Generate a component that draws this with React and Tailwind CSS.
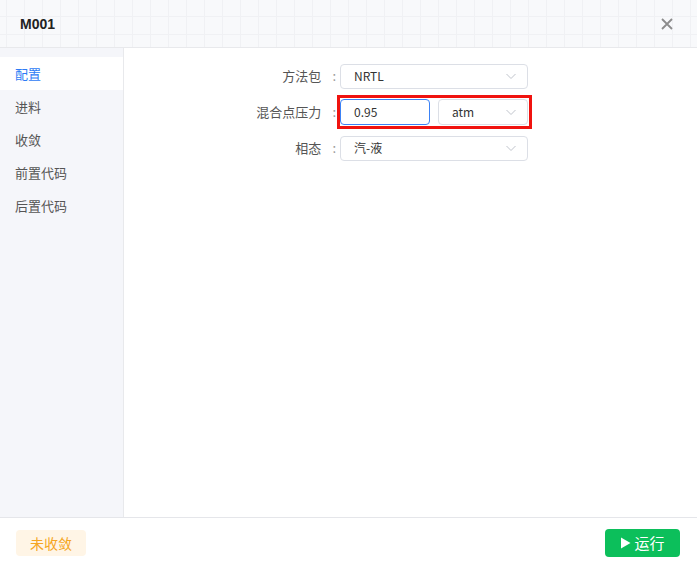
import { useState } from 'react';

const font = { fontFamily: '"Noto Sans CJK SC", "Noto Sans", sans-serif' };

const navItems = ['配置', '进料', '收敛', '前置代码', '后置代码'];

function Chevron() {
  return (
    <svg width="12" height="12" viewBox="0 0 12 12" fill="none" className="text-[#c0c4cc]">
      <path d="M1.5 4l4.5 4.5L10.5 4" stroke="currentColor" strokeWidth="1" />
    </svg>
  );
}

function Select({ value, className = '' }) {
  return (
    <div
      className={`flex items-center justify-between h-[25px] border border-[#dcdfe6] rounded-[4px] bg-white pl-[13px] pr-[10px] text-[12px] text-[#333] ${className}`}
    >
      <span>{value}</span>
      <Chevron />
    </div>
  );
}

function Row({ label, children }) {
  return (
    <div className="flex items-center h-[36px]">
      <div className="w-[216px] text-right text-[13px] text-[#555] pr-[4px]">
        {label}
        <span className="ml-[11px] text-[#999]">:</span>
      </div>
      {children}
    </div>
  );
}

export default function App() {
  const [active, setActive] = useState(0);

  return (
    <div className="w-[697px] h-[568px] bg-white flex flex-col overflow-hidden" style={font}>
      {/* Header */}
      <div className="h-[48px] flex items-center justify-between px-[20px] border-b border-[#e8e9ec] bg-[#f8f9fb] bg-[linear-gradient(#f0f1f4_1px,transparent_1px),linear-gradient(90deg,#f0f1f4_1px,transparent_1px)] bg-[size:18px_18px] bg-[position:6px_-2px]">
        <span className="text-[14px] font-bold text-[#222] mt-[1px]" style={{ fontFamily: '"Liberation Sans", Arial, sans-serif' }}>
          M001
        </span>
        <svg width="12" height="12" viewBox="0 0 12 12" className="mr-[4px] text-[#8c8c8c]">
          <path d="M1 1l10 10M11 1L1 11" stroke="currentColor" strokeWidth="1.8" />
        </svg>
      </div>

      <div className="flex flex-1 min-h-0">
        {/* Sidebar */}
        <div className="w-[124px] bg-[#f5f6fa] border-r border-[#e8e9ec] pt-[9px]">
          {navItems.map((item, i) => (
            <div
              key={item}
              onClick={() => setActive(i)}
              className={`h-[33px] flex items-center pl-[15px] text-[13px] cursor-pointer ${
                active === i ? 'bg-white text-[#2e7bf5]' : 'text-[#555]'
              }`}
            >
              {item}
            </div>
          ))}
        </div>

        {/* Form */}
        <div className="flex-1 pt-[10px]">
          <Row label="方法包">
            <Select value="NRTL" className="w-[188px]" />
          </Row>
          <Row label="混合点压力">
            <div className="flex items-center gap-[8px] border-[3px] border-[#f0130f] pl-0 pr-[1px] py-[1px] -ml-[3px]">
              <div className="w-[90px] h-[26px] border border-[#3b82f6] rounded-[4px] flex items-center pl-[13px] text-[12px] text-[#333]">
                0.95
              </div>
              <Select value="atm" className="w-[90px] h-[26px]" />
            </div>
          </Row>
          <Row label="相态">
            <Select value="汽-液" className="w-[188px]" />
          </Row>
        </div>
      </div>

      {/* Footer */}
      <div className="h-[51px] border-t border-[#e5e6ea] flex items-center justify-between pl-[16px] pr-[17px]">
        <div className="w-[70px] h-[26px] rounded-[4px] bg-[#fff5e6] text-[#f5a623] text-[14px] flex items-center justify-center">
          未收敛
        </div>
        <button className="w-[75px] h-[28px] rounded-[4px] bg-[#0cbf5b] text-white text-[15px] flex items-center justify-center gap-[3px]">
          <svg width="11" height="12" viewBox="0 0 11 12">
            <path d="M1 0.5L10.5 6L1 11.5Z" fill="white" />
          </svg>
          运行
        </button>
      </div>
    </div>
  );
}
